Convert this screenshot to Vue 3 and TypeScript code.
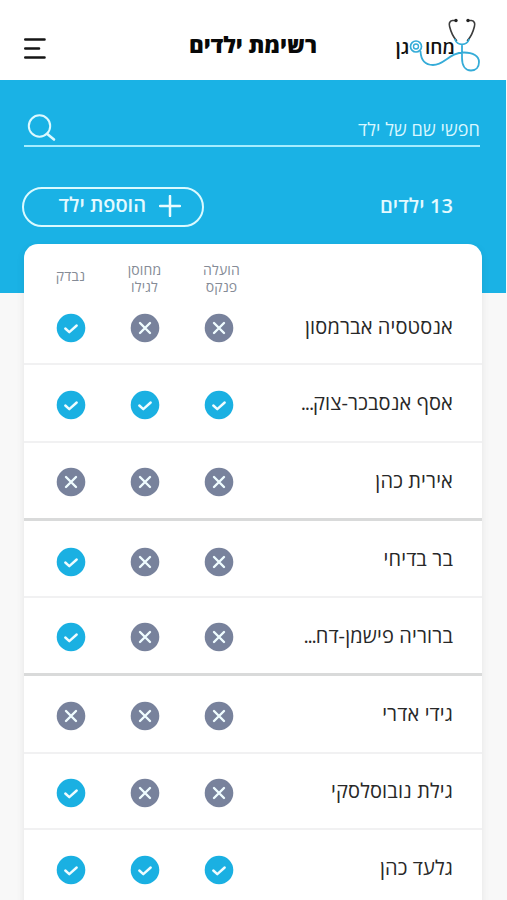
<script setup lang="ts">
interface Child {
  name: string
  truncated?: boolean
  uploaded: boolean
  vaccinated: boolean
  checked: boolean
  size: string
}

const children: Child[] = [
  { name: 'אנסטסיה אברמסון', uploaded: false, vaccinated: false, checked: true, size: 'first' },
  { name: 'אסף אנסבכר-צוק', truncated: true, uploaded: true, vaccinated: true, checked: true, size: 'regular' },
  { name: 'אירית כהן', uploaded: false, vaccinated: false, checked: false, size: 'group-end' },
  { name: 'בר בדיחי', uploaded: false, vaccinated: false, checked: true, size: 'group-start' },
  { name: 'ברוריה פישמן-דח', truncated: true, uploaded: false, vaccinated: false, checked: true, size: 'group-end' },
  { name: 'גידי אדרי', uploaded: false, vaccinated: false, checked: false, size: 'regular' },
  { name: 'גילת נובוסלסקי', uploaded: false, vaccinated: false, checked: true, size: 'short' },
  { name: 'גלעד כהן', uploaded: true, vaccinated: true, checked: true, size: 'regular' },
]

const flags = (child: Child): boolean[] => [child.uploaded, child.vaccinated, child.checked]
</script>

<template>
  <div class="screen" dir="rtl">
    <header class="topbar">
      <svg class="logo" width="92" height="60" viewBox="390 14 92 60" direction="ltr">
        <text class="logo-text" x="425" y="53.500" textLength="30" lengthAdjust="spacingAndGlyphs">מחו</text>
        <text class="logo-text" x="395.500" y="53.500" textLength="14" lengthAdjust="spacingAndGlyphs">גן</text>
        <g fill="none" stroke-linecap="round">
          <path d="M455 20.500h-2.500c-3 .5-3.800 3-2.900 6 1.200 5 3.200 10 6.900 14M469 20.500h2.500c3 .5 3.800 3 2.900 6-1.200 5-3.200 10-6.900 14" stroke="#3c3c3c" stroke-width="1.600" />
          <path d="M455 39.500c2.500 6.500 11.500 6.500 14 0M462 45v13c0 8 3.500 12.500 9 12.500 5 0 8-3.500 8-8.500 0-6-6-9.500-15-9.500-15 0-19 12.500-31 12.500-8 0-12-5-12.500-13.500" stroke="#35acd8" stroke-width="1.800" />
          <circle cx="416" cy="46.500" r="5.500" stroke="#35acd8" stroke-width="1.700" />
          <circle cx="416" cy="46.500" r="2.500" stroke="#35acd8" stroke-width="1.400" />
        </g>
        <circle cx="456" cy="20.500" r="1.700" fill="#222" />
        <circle cx="468" cy="20.500" r="1.700" fill="#222" />
      </svg>
      <h1 class="title">רשימת ילדים</h1>
      <svg class="menu" width="22" height="22" viewBox="0 0 22 22">
        <path d="M1.300 1.500H20.500M1.300 10.500H15M1.300 19.500H20.500" fill="none" stroke="#151515" stroke-width="2.600" stroke-linecap="round" />
      </svg>
    </header>

    <main class="content">
      <div class="search">
        <span class="search-label">חפשי שם של ילד</span>
        <svg class="search-icon" width="30" height="28" viewBox="0 0 30 28">
          <circle cx="12.500" cy="12" r="10.700" />
          <path d="M20 19.800l7 5.700" stroke-width="2.600" />
        </svg>
      </div>

      <div class="summary">
        <span class="count">13 ילדים</span>
        <button class="add" type="button">
          <svg width="22" height="22" viewBox="0 0 22 22">
            <path d="M11 1v20M1 11h20" fill="none" stroke="#e9fcff" stroke-width="2.500" stroke-linecap="round" />
          </svg>
          <span class="add-label">הוספת ילד</span>
        </button>
      </div>

      <section class="card">
        <div class="columns">
          <span></span>
          <span class="column">הועלה<br />פנקס</span>
          <span class="column">מחוסן<br />לגילו</span>
          <span class="column single">נבדק</span>
        </div>
        <div v-for="child in children" :key="child.name" class="row" :class="child.size">
          <span class="name">{{ child.name }}<span v-if="child.truncated" class="dots">...</span></span>
          <svg v-for="(done, i) in flags(child)" :key="i" class="status" width="30" height="30" viewBox="0 0 30 30">
            <circle cx="15" cy="15" r="14.300" :fill="done ? '#1ab0e2' : '#78829c'" />
            <path :d="done ? 'M9.300 15.500l4 3.700 7.400-6.700' : 'M10 10l10 10M20 10l-10 10'" />
          </svg>
        </div>
      </section>
    </main>
  </div>
</template>

<style>
body {
  margin: 0;
  background: #f8f8f8;
}
</style>

<style scoped>
.screen {
  box-sizing: border-box;
  width: 507px;
  height: 900px;
  overflow: hidden;
  background: #f8f8f8;
  font-family: "Open Sans", "Noto Sans", "Liberation Sans", sans-serif;
}
.topbar {
  box-sizing: border-box;
  display: grid;
  grid-template-columns: 160px 1fr 160px;
  height: 80px;
  padding: 14px 25px 0 24px;
  background: #fff;
}
.logo {
  display: block;
}
.logo-text {
  font-size: 19px;
  font-weight: 600;
  fill: #111;
}
.title {
  margin: 16px 0 0;
  font-size: 22.500px;
  line-height: 30px;
  font-weight: 800;
  text-align: center;
  white-space: nowrap;
  color: #080808;
}
.menu {
  margin-top: 24px;
  justify-self: end;
}
.content {
  box-sizing: border-box;
  height: 820px;
  padding: 31px 25px 0 24px;
  background: linear-gradient(#1ab2e5, #1ab2e5) left top / 506px 213px no-repeat, #f8f8f8;
}
.search {
  box-sizing: border-box;
  display: flex;
  justify-content: space-between;
  height: 36px;
  margin-right: 2px;
  border-bottom: 2px solid #a5edff;
}
.search-label {
  padding-top: 5px;
  font-size: 18px;
  line-height: 26px;
  letter-spacing: 0.100px;
  color: #d8f7ff;
}
.search-icon {
  margin: 3px 0 0 3px;
  fill: none;
  stroke: #dcf9ff;
  stroke-width: 2;
  stroke-linecap: round;
}
.summary {
  display: flex;
  justify-content: space-between;
  height: 57px;
  padding-top: 40px;
}
.count {
  padding: 4px 29px 0 0;
  font-size: 20px;
  line-height: 30px;
  font-weight: 600;
  letter-spacing: 0.100px;
  color: #e4faff;
}
.add {
  box-sizing: border-box;
  display: flex;
  width: 182px;
  height: 40px;
  margin: 0 0 0 -2px;
  padding: 6px 21px 0 0;
  gap: 13px;
  border: 2px solid #dafaff;
  border-radius: 20px;
  background: transparent;
  font-family: inherit;
  color: #e4faff;
}
.add-label {
  margin-top: -5px;
  font-size: 20px;
  line-height: 30px;
  font-weight: 600;
  white-space: nowrap;
}
.card {
  width: 458px;
  height: 700px;
  border-radius: 14px 14px 0 0;
  background: #fff;
  box-shadow: 0 3px 9px rgba(0, 0, 0, 0.08);
}
.columns,
.row {
  display: grid;
  grid-template-columns: 1fr 74px 74px 74px;
  padding: 0 29px 0 9.500px;
}
.columns {
  height: 52px;
}
.column {
  padding-top: 17px;
  text-align: center;
  font-size: 14px;
  line-height: 17px;
  letter-spacing: 0.150px;
  color: #858b96;
}
.column:nth-child(2) {
  margin-right: -6px;
}
.column.single {
  padding-top: 23px;
}
.row {
  box-sizing: border-box;
  align-items: center;
  height: 78px;
  border-bottom: 2px solid #f1f1f2;
}
.row.first {
  height: 69px;
  padding-bottom: 6px;
}
.row.short {
  height: 76px;
}
.row.group-end {
  border-bottom: 3px solid #d9dada;
}
.row.group-start {
  height: 77px;
}
.name {
  font-size: 20px;
  line-height: 30px;
  letter-spacing: 0.130px;
  white-space: nowrap;
  color: #282828;
}
.dots {
  letter-spacing: -1.200px;
}
.status {
  justify-self: center;
  margin-top: 3px;
}
.row.first .status {
  margin-top: 2px;
}
.row.group-start .status {
  margin-top: 7px;
}
.status path {
  fill: none;
  stroke: #effcff;
  stroke-width: 2.400;
  stroke-linecap: round;
  stroke-linejoin: round;
}
</style>
